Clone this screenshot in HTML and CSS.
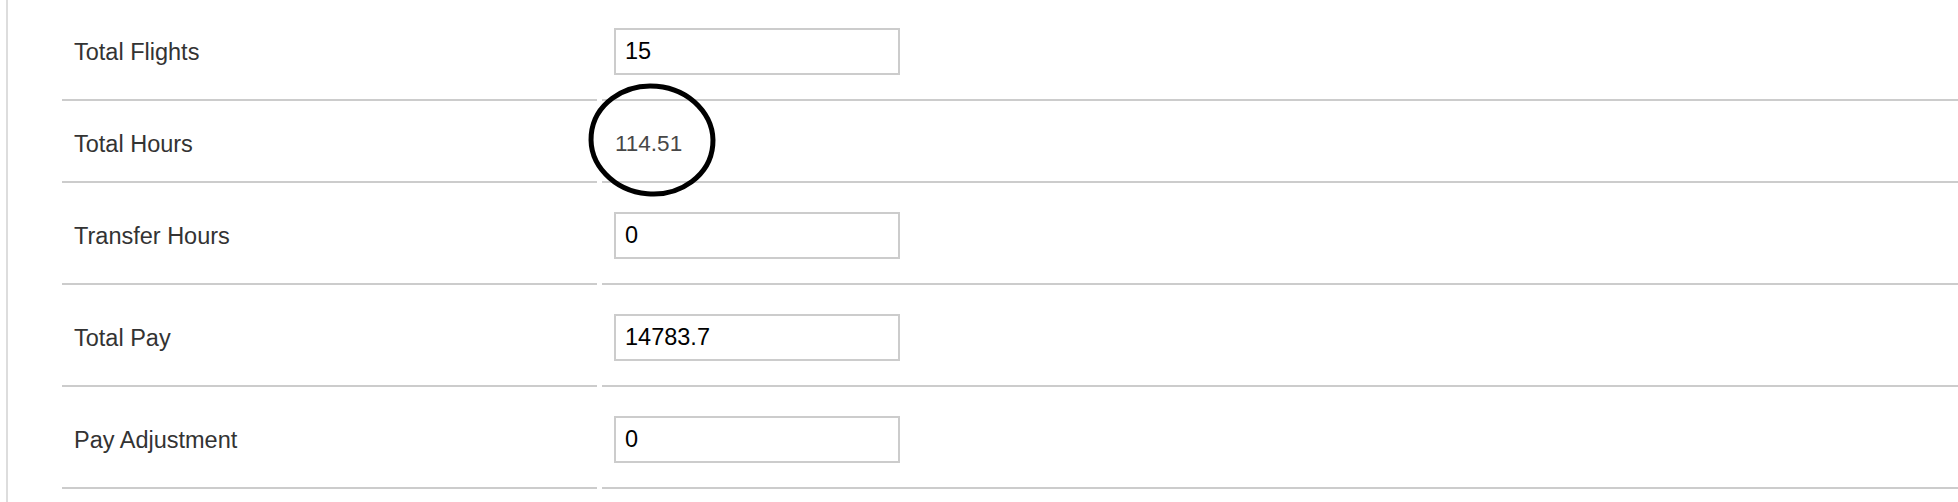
FILE: index.html
```html
<!DOCTYPE html>
<html lang="en">
<head>
<meta charset="utf-8">
<title>Totals</title>
<link rel="stylesheet" href="styles.css">
</head>
<body>
<div class="page">
  <div class="totals">
    <div class="cell label first">Total Flights</div>
    <div class="cell value first"><input class="field" type="text" value="15"></div>

    <div class="cell label">Total Hours</div>
    <div class="cell value">
      <span class="static">114.51</span>
      <svg class="mark" width="134" height="118" viewBox="0 0 134 118" aria-hidden="true">
        <ellipse cx="66" cy="58" rx="61" ry="54" transform="rotate(5 66 58)" fill="none" stroke="#000" stroke-width="5"/>
      </svg>
    </div>

    <div class="cell label">Transfer Hours</div>
    <div class="cell value"><input class="field" type="text" value="0"></div>

    <div class="cell label">Total Pay</div>
    <div class="cell value"><input class="field" type="text" value="14783.7"></div>

    <div class="cell label">Pay Adjustment</div>
    <div class="cell value"><input class="field" type="text" value="0"></div>
  </div>
</div>
</body>
</html>
```
FILE: styles.css
```css
* { box-sizing: border-box; }

html, body {
  margin: 0;
  padding: 0;
  background: #fff;
}

body {
  font-family: "Liberation Sans", Arial, Helvetica, sans-serif;
}

.page {
  margin-left: 6px;
  min-height: 100vh;
  border-left: 2px solid #dddddd;
  padding-left: 54px;
}

.totals {
  display: grid;
  grid-template-columns: 535px 1fr;
  column-gap: 5px;
}

.cell {
  display: flex;
  align-items: center;
  padding: 30px 12px 23px 12px;
  border-bottom: 2px solid #cccccc;
  line-height: 27px;
}

.cell.first {
  padding-top: 29px;
}

.value {
  padding-top: 29px;
  padding-bottom: 24px;
}

.value.first {
  padding-top: 28px;
}

.label {
  font-size: 23.5px;
  color: #333333;
}

.value {
  position: relative;
}

.static {
  font-size: 22.5px;
  color: #474747;
  padding-left: 1px;
}

.field {
  width: 286px;
  height: 47px;
  margin: 0;
  border: 2px solid #cccccc;
  border-radius: 0;
  padding: 0 9px;
  font-family: "Liberation Sans", Arial, Helvetica, sans-serif;
  font-size: 23.5px;
  color: #000;
  background: #fff;
  outline: none;
}

.mark {
  position: absolute;
  left: -16px;
  top: -19px;
  overflow: visible;
}
```
